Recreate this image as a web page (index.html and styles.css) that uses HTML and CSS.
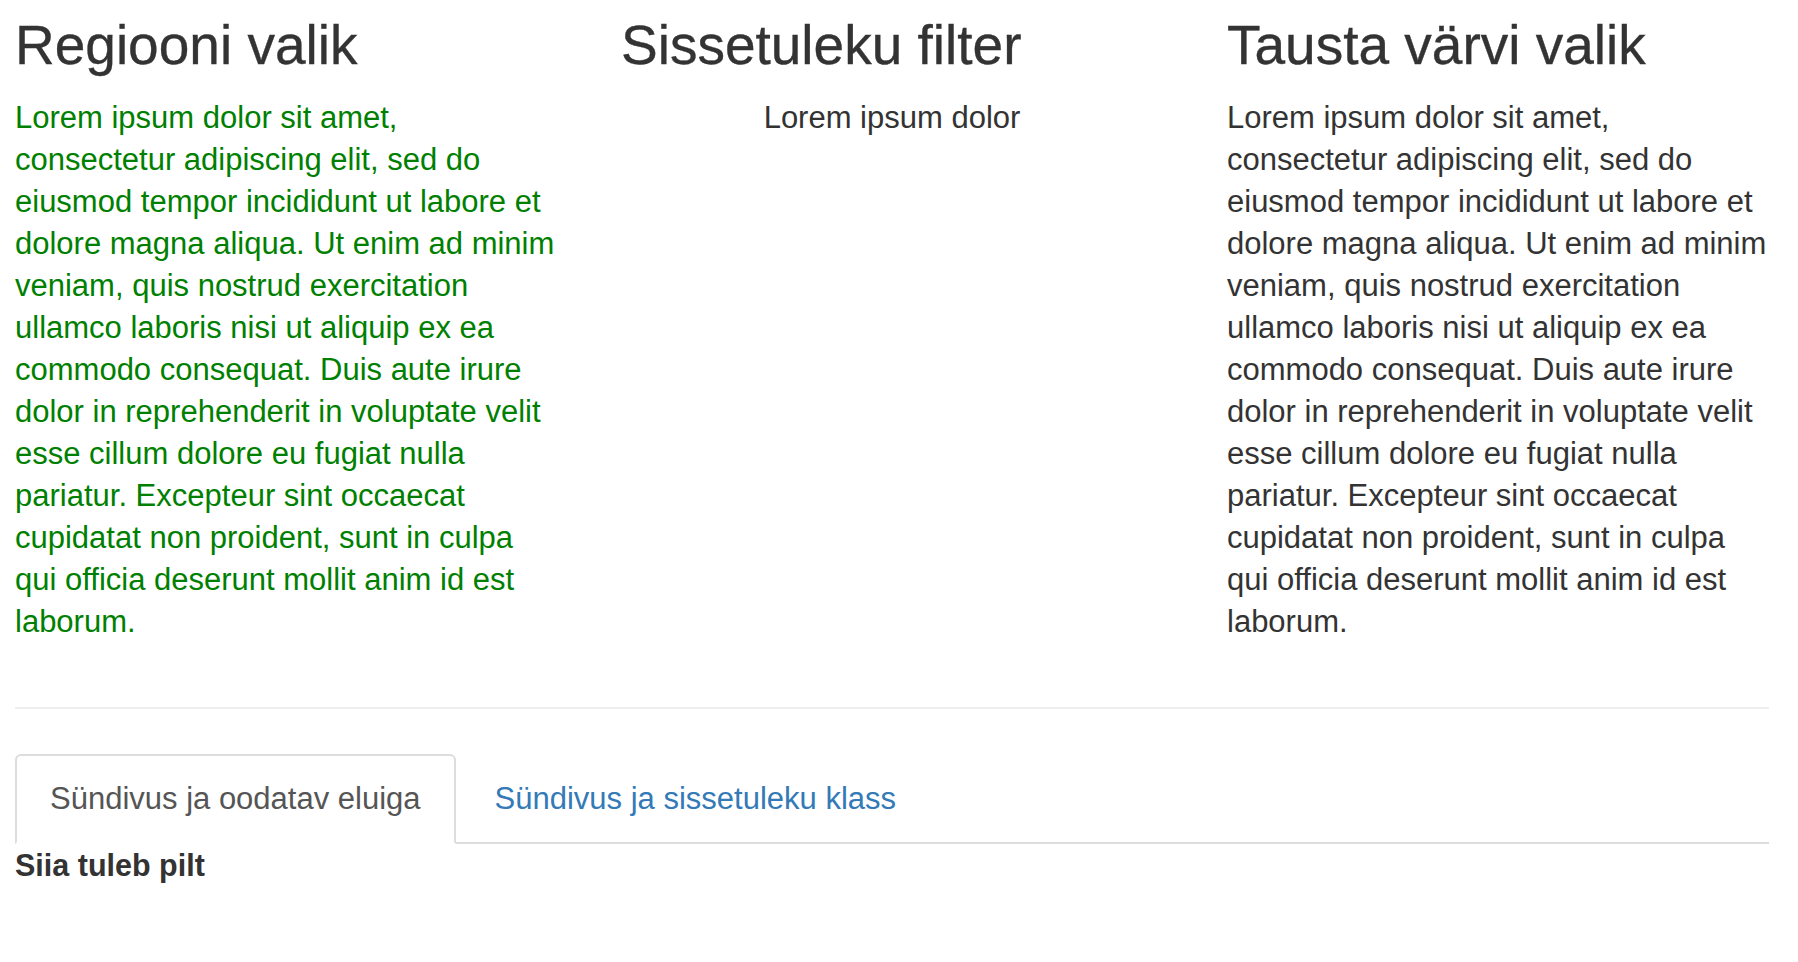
FILE: index.html
```html
<!DOCTYPE html>
<html lang="et">
<head>
<meta charset="utf-8">
<title>Regiooni valik</title>
<link rel="stylesheet" href="styles.css">
</head>
<body>
<div class="page">
  <div class="cols">
    <div class="col">
      <h2 class="title">Regiooni valik</h2>
      <p class="text green">Lorem ipsum dolor sit amet, consectetur adipiscing elit, sed do eiusmod tempor incididunt ut labore et dolore magna aliqua. Ut enim ad minim veniam, quis nostrud exercitation ullamco laboris nisi ut aliquip ex ea commodo consequat. Duis aute irure dolor in reprehenderit in voluptate velit esse cillum dolore eu fugiat nulla pariatur. Excepteur sint occaecat cupidatat non proident, sunt in culpa qui officia deserunt mollit anim id est laborum.</p>
    </div>
    <div class="col">
      <h2 class="title">Sissetuleku filter</h2>
      <p class="text center">Lorem ipsum dolor</p>
    </div>
    <div class="col">
      <h2 class="title">Tausta värvi valik</h2>
      <p class="text">Lorem ipsum dolor sit amet, consectetur adipiscing elit, sed do eiusmod tempor incididunt ut labore et dolore magna aliqua. Ut enim ad minim veniam, quis nostrud exercitation ullamco laboris nisi ut aliquip ex ea commodo consequat. Duis aute irure dolor in reprehenderit in voluptate velit esse cillum dolore eu fugiat nulla pariatur. Excepteur sint occaecat cupidatat non proident, sunt in culpa qui officia deserunt mollit anim id est laborum.</p>
    </div>
  </div>
  <hr class="divider">
  <ul class="tabs">
    <li class="tab active"><a href="#" class="tab-link">Sündivus ja oodatav eluiga</a></li>
    <li class="tab"><a href="#" class="tab-link">Sündivus ja sissetuleku klass</a></li>
  </ul>
  <div class="tab-content">
    <strong class="placeholder">Siia tuleb pilt</strong>
  </div>
</div>
</body>
</html>
```

FILE: styles.css
```css
html, body {
  margin: 0;
  padding: 0;
  background: #fff;
}

body {
  font-family: "Liberation Sans", Arial, Helvetica, sans-serif;
  font-size: 31px;
  line-height: 42px;
  color: #333;
}

.page {
  padding: 0 29px 0 15px;
}

.cols {
  display: grid;
  grid-template-columns: repeat(3, 1fr);
  column-gap: 64px;
}

.col {
  min-width: 0;
}

.title {
  font-size: 55px;
  font-weight: 400;
  line-height: 1.1;
  margin: 15px 0 21px;
  color: #333;
  -webkit-text-stroke: 0.35px #333;
}

.text {
  margin: 0;
}

.green {
  color: #008000;
}

.center {
  text-align: center;
}

.divider {
  margin: 64px 0 45px;
  border: 0;
  border-top: 2px solid #eee;
  height: 0;
}

.tabs {
  display: flex;
  list-style: none;
  margin: 0;
  padding: 0;
  border-bottom: 2px solid #ddd;
}

.tab {
  margin-bottom: -2px;
  margin-right: 4px;
}

.tab-link {
  display: block;
  padding: 22px 33px;
  border: 2px solid transparent;
  border-radius: 6px 6px 0 0;
  color: #337ab7;
  text-decoration: none;
}

.tab.active .tab-link {
  color: #555;
  background: #fff;
  border-color: #ddd;
  border-bottom-color: transparent;
}

.tab-content {
  display: block;
}

.placeholder {
  font-weight: 700;
  font-size: 30.5px;
  color: #333;
}
```
